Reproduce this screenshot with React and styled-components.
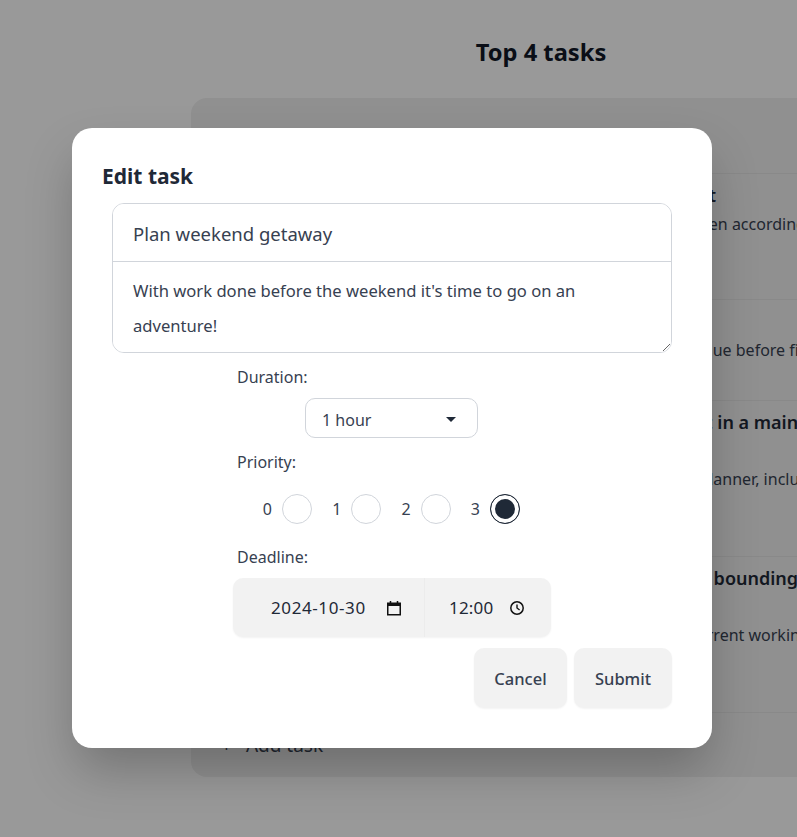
import React from "react";
import styled, { createGlobalStyle } from "styled-components";

const tasks = [
  {
    title: "Finish this quarterly project report and a revised draft",
    text: "Review all of the figures and rewrite the conclusion section, then according to the plan",
    height: 126,
  },
  {
    title: "Send the invoices",
    text: "Collect every single payment from partners that has become due before filing them",
    height: 101,
  },
  {
    title: "Create a brand new reusable tasks layout component in a main module of the app",
    text: "Build the complete weekly and monthly view of the real task planner, including all the tasks",
    height: 156,
  },
  {
    title: "Fix these small problems with all tasks outside of the bounding box of the list view",
    text: "Make sure this works and nothing else breaks in the whole current working version",
    height: 156,
  },
];

const priorities = [0, 1, 2, 3];

function App() {
  return (
    <Page>
      <GlobalStyle />
      <Main>
        <Heading>Top 4 tasks</Heading>
        <Card>
          <TaskList>
            {tasks.map((task) => (
              <TaskRow key={task.title} $height={task.height}>
                <TaskTitle>{task.title}</TaskTitle>
                <TaskText>{task.text}</TaskText>
              </TaskRow>
            ))}
          </TaskList>
          <AddTask>
            <span>+</span>
            Add task
          </AddTask>
        </Card>
      </Main>
      <Overlay>
        <Modal>
          <ModalTitle>Edit task</ModalTitle>
          <EditBox>
            <TitleInput defaultValue="Plan weekend getaway" />
            <TextArea defaultValue="With work done before the weekend it's time to go on an adventure!" />
          </EditBox>
          <Fields>
            <FieldLabel>Duration:</FieldLabel>
            <Select>
              1 hour
              <svg width="10" height="5" viewBox="0 0 10 5">
                <path d="M0 0h10L5 5z" fill="#1f2937" />
              </svg>
            </Select>
            <FieldLabel $top={12}>Priority:</FieldLabel>
            <RadioRow>
              {priorities.map((value) => (
                <RadioLabel key={value}>
                  {value}
                  <Radio $checked={value === 3} />
                </RadioLabel>
              ))}
            </RadioRow>
            <FieldLabel $top={21}>Deadline:</FieldLabel>
            <DateGroup>
              <DatePart $width={191} $left={38} $gap={20} $spacing={0.6}>
                2024-10-30
                <svg width="16" height="16" viewBox="0 0 16 16" fill="none">
                  <path d="M1.75 3.25h12.5v11.5H1.75z" stroke="#111" strokeWidth="1.5" />
                  <path d="M2 3h12v3H2z" fill="#111" />
                  <path d="M4.5 1v2.5M11.5 1v2.5" stroke="#111" strokeWidth="1.5" />
                </svg>
              </DatePart>
              <DatePart $width={127} $left={24} $gap={16} $spacing={0.2}>
                12:00
                <svg width="16" height="16" viewBox="0 0 16 16" fill="none">
                  <circle cx="8" cy="8" r="6.2" stroke="#111" strokeWidth="1.5" />
                  <path d="M8 4.5V8l2.6 2" stroke="#111" strokeWidth="1.4" />
                </svg>
              </DatePart>
            </DateGroup>
          </Fields>
          <Actions>
            <ActionButton $width={93}>Cancel</ActionButton>
            <ActionButton $width={98}>Submit</ActionButton>
          </Actions>
        </Modal>
      </Overlay>
    </Page>
  );
}

const GlobalStyle = createGlobalStyle`
  body {
    margin: 0;
    background: #fff;
    font-family: "Noto Sans", sans-serif;
    color: #374151;
  }
`;

const Page = styled.div`
  position: relative;
  width: 797px;
  height: 837px;
  overflow: hidden;
`;

const Main = styled.div`
  width: 700px;
  margin-left: 191px;
  padding-top: 34px;
`;

const Heading = styled.h1`
  margin: 0 0 28px;
  font-size: 23.7px;
  line-height: 36px;
  font-weight: 700;
  text-align: center;
  color: #111827;
`;

const Card = styled.div`
  height: 679px;
  padding-top: 75px;
  box-sizing: border-box;
  background: #f0f0f0;
  border-radius: 16px;
`;

const TaskList = styled.div`
  padding: 0 30px;
`;

const TaskRow = styled.div`
  height: ${(p) => p.$height}px;
  box-sizing: border-box;
  padding: 7px 0 0 24px;
  border-top: 1px solid #e5e5e5;
`;

const TaskTitle = styled.div`
  font-size: 18px;
  line-height: 28.5px;
  font-weight: 600;
  color: #1f2937;
`;

const TaskText = styled.div`
  font-size: 16px;
  line-height: 28px;
`;

const AddTask = styled.div`
  display: flex;
  gap: 14px;
  padding-top: 18px;
  border-top: 1px solid #e5e5e5;
  margin: 0 30px;
  font-size: 19px;
  line-height: 28px;
`;

const Overlay = styled.div`
  position: absolute;
  inset: 0;
  display: flex;
  align-items: flex-start;
  padding: 128px 0 0 72px;
  background: rgba(0, 0, 0, 0.4);
`;

const Modal = styled.div`
  width: 640px;
  height: 620px;
  box-sizing: border-box;
  padding: 32px 40px 0 30px;
  background: #fff;
  border-radius: 20px;
  box-shadow: 0 25px 50px -5px rgba(0, 0, 0, 0.25);
`;

const ModalTitle = styled.h2`
  margin: 0 0 11px;
  font-size: 21px;
  line-height: 32px;
  font-weight: 700;
  color: #1f2937;
`;

const EditBox = styled.div`
  width: 560px;
  height: 150px;
  margin-left: 10px;
  box-sizing: border-box;
  display: flex;
  flex-direction: column;
  border: 1px solid #d1d5db;
  border-radius: 12px;
  overflow: hidden;
`;

const TitleInput = styled.input`
  height: 58px;
  flex: none;
  box-sizing: border-box;
  padding: 2px 20px 0;
  border: none;
  border-bottom: 1px solid #d1d5db;
  outline: none;
  font: 18.5px "Noto Sans", sans-serif;
  color: #374151;
`;

const TextArea = styled.textarea`
  flex: 1;
  padding: 11px 20px;
  border: none;
  outline: none;
  font: 16.6px/35px "Noto Sans", sans-serif;
  color: #374151;
`;

const Fields = styled.div`
  display: flex;
  flex-direction: column;
  align-items: flex-start;
  padding: 12px 0 0 131px;
`;

const FieldLabel = styled.div`
  margin: ${(p) => p.$top || 0}px 0 0 4px;
  font-size: 16px;
  line-height: 24px;
`;

const Select = styled.div`
  width: 173px;
  height: 40px;
  margin: 9px 0 0 72px;
  padding: 3px 21px 0 16px;
  box-sizing: border-box;
  display: flex;
  align-items: center;
  justify-content: space-between;
  border: 1px solid #d1d5db;
  border-radius: 10px;
  font-size: 16px;
`;

const RadioRow = styled.div`
  display: flex;
  gap: 19.33px;
  margin: 20px 0 0 29px;
`;

const RadioLabel = styled.label`
  width: 50px;
  display: flex;
  align-items: center;
  justify-content: flex-end;
  gap: 10px;
  font-size: 16px;
`;

const Radio = styled.span`
  width: 30px;
  height: 30px;
  box-sizing: border-box;
  border-radius: 50%;
  border: 1px solid ${(p) => (p.$checked ? "#1f2937" : "#d1d5db")};
  background: ${(p) => (p.$checked ? "#1f2937" : "#fff")};
  box-shadow: ${(p) => (p.$checked ? "inset 0 0 0 4px #fff" : "none")};
`;

const DateGroup = styled.div`
  display: flex;
  height: 59px;
  margin-top: 9px;
  background: #f2f2f2;
  border-radius: 10px;
  box-shadow: 0 1px 2px rgba(0, 0, 0, 0.05);
`;

const DatePart = styled.div`
  width: ${(p) => p.$width}px;
  box-sizing: border-box;
  display: flex;
  align-items: center;
  padding-left: ${(p) => p.$left}px;
  gap: ${(p) => p.$gap}px;
  font-size: 17px;
  letter-spacing: ${(p) => p.$spacing}px;
  color: #1f2937;

  & + & {
    border-left: 1px solid #ececec;
  }
`;

const Actions = styled.div`
  display: flex;
  justify-content: flex-end;
  gap: 7px;
  margin-top: 11px;
`;

const ActionButton = styled.button`
  width: ${(p) => p.$width}px;
  height: 60px;
  border: none;
  border-radius: 10px;
  background: #f2f2f2;
  box-shadow: 0 1px 2px rgba(0, 0, 0, 0.05);
  font: 500 16.5px "Noto Sans", sans-serif;
  color: #374151;
`;

export default App;
